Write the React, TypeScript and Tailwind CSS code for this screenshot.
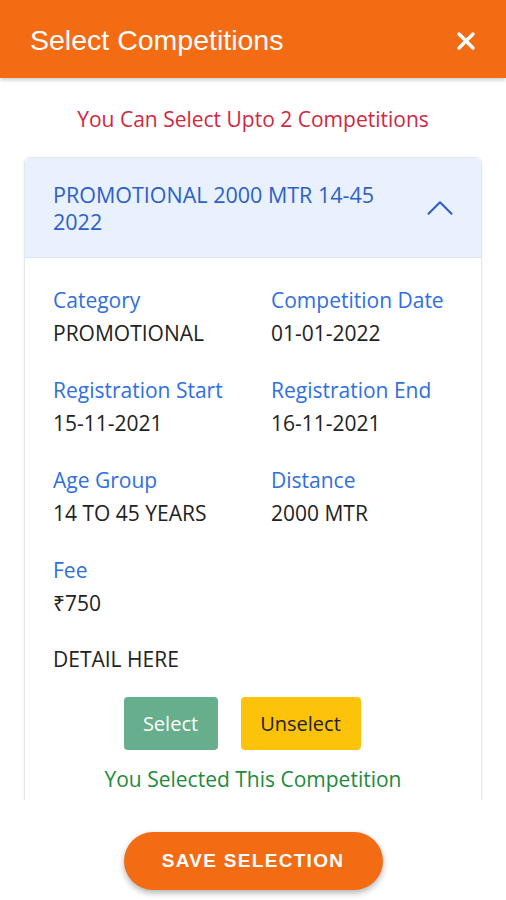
import { ChevronUp, X } from "lucide-react";

const fields = [
  ["Category", "PROMOTIONAL", "Competition Date", "01-01-2022"],
  ["Registration Start", "15-11-2021", "Registration End", "16-11-2021"],
  ["Age Group", "14 TO 45 YEARS", "Distance", "2000 MTR"],
];

export default function App() {
  return (
    <div className="w-[506px] h-[900px] flex flex-col bg-white font-['Open_Sans',sans-serif] overflow-hidden">
      {/* Header */}
      <div className="h-[78px] shrink-0 bg-[#f36c14] flex items-center justify-between pl-[30px] pr-[26px] pt-[3px] shadow-[0_2px_4px_rgba(0,0,0,0.2)] z-10">
        <h1 className="text-white text-[28.5px] font-['Liberation_Sans',sans-serif]">Select Competitions</h1>
        <X className="w-[28px] h-[28px] text-white" strokeWidth={3} />
      </div>

      {/* Scroll area */}
      <div className="h-[722px] shrink-0 overflow-hidden px-[24px]">
        <p className="text-center text-[#d0283f] text-[21px] mt-[27px] leading-[28px]">You Can Select Upto 2 Competitions</p>

        <div className="mt-[24px] rounded-[6px] border border-[#e5e7eb] shadow-[0_1px_3px_rgba(0,0,0,0.08)]">
          <div className="h-[100px] bg-[#e8f1fd] rounded-t-[6px] border-b border-[#dbe3ee] flex items-center justify-between pl-[28px] pr-[18px]">
            <div className="text-[#2d5fcb] text-[21.5px] leading-[27px] w-[345px]">PROMOTIONAL 2000 MTR 14-45 2022</div>
            <ChevronUp className="w-[46px] h-[46px] text-[#2d5fcb]" strokeWidth={1.1} />
          </div>

          <div className="px-[28px] pt-[27px] pb-[20px]">
            {fields.map(([l1, v1, l2, v2]) => (
              <div key={l1} className="grid grid-cols-[218px_1fr] mb-[24px]">
                <div>
                  <div className="text-[#2f6fe0] text-[21px] leading-[30px]">{l1}</div>
                  <div className="text-[#222] text-[21px] leading-[36px]">{v1}</div>
                </div>
                <div>
                  <div className="text-[#2f6fe0] text-[21px] leading-[30px]">{l2}</div>
                  <div className="text-[#222] text-[21px] leading-[36px]">{v2}</div>
                </div>
              </div>
            ))}
            <div>
              <div className="text-[#2f6fe0] text-[21px] leading-[30px]">Fee</div>
              <div className="text-[#222] text-[21px] leading-[36px]">₹750</div>
            </div>
            <div className="text-[#222] text-[21px] leading-[30px] mt-[23px]">DETAIL HERE</div>

            <div className="flex justify-center gap-[23px] mt-[23px] pr-[22px]">
              <button className="w-[94px] h-[53px] rounded-[4px] bg-[#66ae8c] text-white text-[20px]">Select</button>
              <button className="w-[120px] h-[53px] rounded-[4px] bg-[#fdc30a] text-[#222] text-[20px]">Unselect</button>
            </div>
            <p className="text-center text-[#1e8a3c] text-[21px] leading-[29px] mt-[15px]">You Selected This Competition</p>
          </div>
        </div>
      </div>

      {/* Footer */}
      <div className="flex-1 flex items-start justify-center pt-[32px]">
        <button className="w-[259px] h-[58px] rounded-full bg-[#f36c14] text-white text-[19px] font-bold tracking-[1.3px] font-['Liberation_Sans',sans-serif] shadow-[0_3px_6px_rgba(0,0,0,0.3)]">
          SAVE SELECTION
        </button>
      </div>
    </div>
  );
}
